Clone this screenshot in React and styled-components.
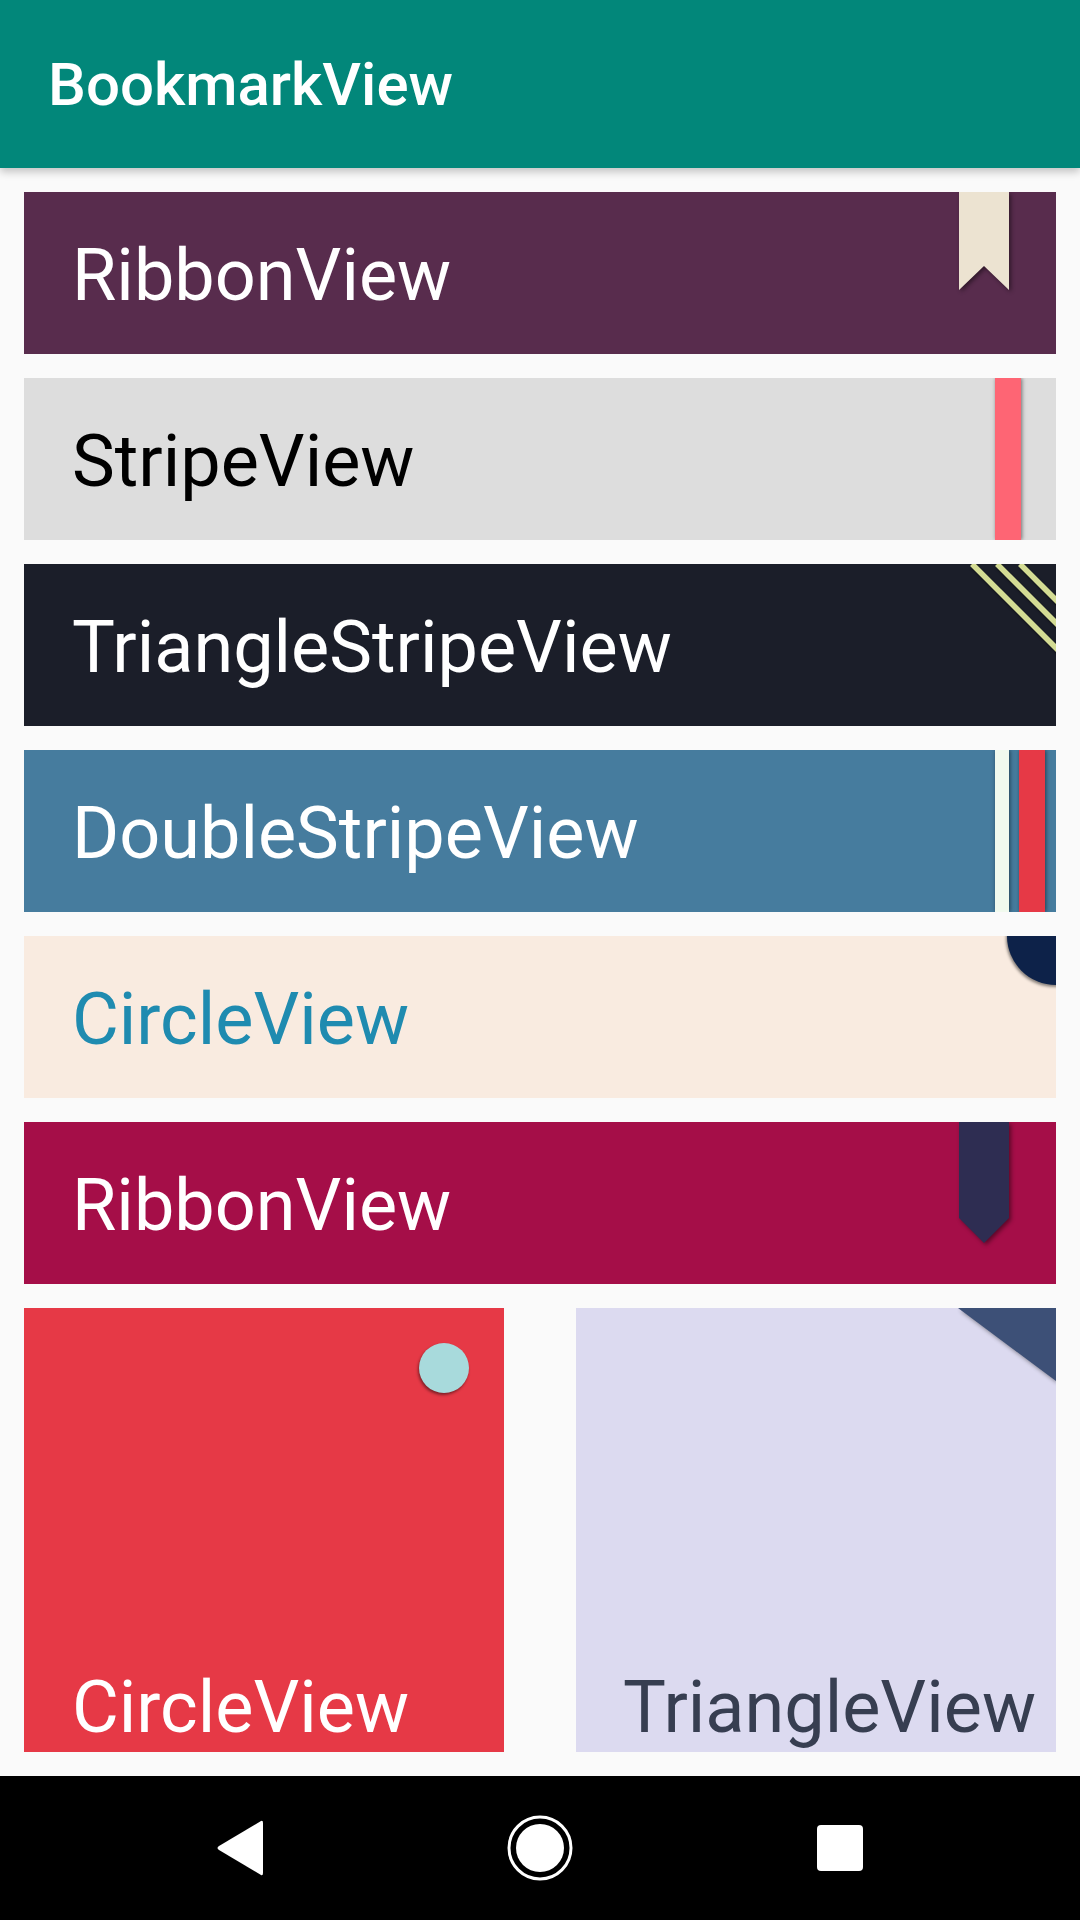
import styled, { createGlobalStyle } from "styled-components";

const GlobalStyle = createGlobalStyle`
  html, body {
    margin: 0;
    padding: 0;
    background: #fafafa;
  }
  * {
    box-sizing: border-box;
  }
`;

const Screen = styled.div`
  width: 1080px;
  height: 1920px;
  display: flex;
  flex-direction: column;
  background: #fafafa;
  font-family: Roboto, "Noto Sans", sans-serif;
  overflow: hidden;
`;

const AppBar = styled.header`
  height: 168px;
  flex-shrink: 0;
  display: flex;
  align-items: center;
  padding-left: 48px;
  background: #02877a;
  color: #fff;
  font-size: 60px;
  font-weight: 500;
  box-shadow: 0 4px 8px rgba(0, 0, 0, 0.22);
  position: relative;
  z-index: 2;
`;

const List = styled.main`
  flex: 1;
  display: flex;
  flex-direction: column;
  gap: 24px;
  padding: 24px;
`;

const Card = styled.div`
  position: relative;
  overflow: hidden;
  height: 162px;
  display: flex;
  align-items: center;
  padding: 4px 0 0 48px;
  background: ${(p) => p.bg};
  color: ${(p) => p.fg || "#fff"};
  font-size: 72px;
`;

const SquareRow = styled.div`
  display: grid;
  grid-template-columns: 480px 480px;
  column-gap: 72px;
`;

const Square = styled.div`
  position: relative;
  overflow: hidden;
  height: 444px;
  display: flex;
  align-items: flex-end;
  justify-content: ${(p) => (p.right ? "flex-end" : "flex-start")};
  padding: ${(p) => (p.right ? "0 20px 2px 0" : "0 0 2px 48px")};
  background: ${(p) => p.bg};
  color: ${(p) => p.fg || "#fff"};
  font-size: 72px;
`;

const Corner = styled.svg`
  position: absolute;
  top: 0;
  right: ${(p) => p.right || 0}px;
  overflow: visible;
  filter: drop-shadow(2px 2px 2px rgba(0, 0, 0, 0.45));
`;

const Stripe = styled.div`
  position: absolute;
  top: 0;
  bottom: 0;
  right: ${(p) => p.right}px;
  width: ${(p) => p.w}px;
  background: ${(p) => p.color};
  box-shadow: 1px 0 4px rgba(0, 0, 0, 0.5);
`;

const Dot = styled.div`
  position: absolute;
  top: ${(p) => p.top}px;
  right: ${(p) => p.right}px;
  width: ${(p) => p.size}px;
  height: ${(p) => p.size}px;
  border-radius: 50%;
  background: ${(p) => p.color};
  box-shadow: -1px 2px 3px rgba(0, 0, 0, 0.45);
`;

const NavBar = styled.nav`
  height: 144px;
  flex-shrink: 0;
  background: #000;
  display: flex;
  justify-content: center;
  align-items: center;
  gap: 180px;
`;

const NavButton = styled.div`
  width: 120px;
  height: 120px;
  display: flex;
  align-items: center;
  justify-content: center;
`;

const Ribbon = ({ color, shape }) => (
  <Corner right={47} width="50" height="122" viewBox="0 0 50 122">
    {shape === "notch" ? (
      <polygon points="0,0 50,0 50,98 25,74 0,98" fill={color} />
    ) : (
      <polygon points="0,0 50,0 50,96 25,121 0,96" fill={color} />
    )}
  </Corner>
);

const DiagonalStripes = () => (
  <svg
    width="84"
    height="84"
    viewBox="0 0 84 84"
    style={{ position: "absolute", top: 0, right: 0, overflow: "visible" }}
  >
    <g
      stroke="#d4dc94"
      strokeWidth="5.5"
      style={{ filter: "drop-shadow(1px 2px 1px rgba(0,0,0,0.5))" }}
    >
      <line x1="0" y1="0" x2="90" y2="90" />
      <line x1="25" y1="0" x2="90" y2="65" />
      <line x1="48" y1="0" x2="90" y2="42" />
    </g>
  </svg>
);

const CornerTriangle = () => (
  <Corner width="98" height="73" viewBox="0 0 98 73">
    <polygon points="0,0 98,0 98,73" fill="#3d5077" />
  </Corner>
);

export default function App() {
  return (
    <>
      <GlobalStyle />
      <Screen>
        <AppBar>BookmarkView</AppBar>
        <List>
          <Card bg="#582c4d">
            RibbonView
            <Ribbon color="#ece3d1" shape="notch" />
          </Card>
          <Card bg="#dddddd" fg="#000">
            StripeView
            <Stripe right={35} w={26} color="#fe6574" />
          </Card>
          <Card bg="#1b1e29">
            TriangleStripeView
            <DiagonalStripes />
          </Card>
          <Card bg="#467c9e">
            DoubleStripeView
            <Stripe right={47} w={14} color="#f1faee" />
            <Stripe right={11} w={26} color="#e63946" />
          </Card>
          <Card bg="#f9ebe0" fg="#1f8bb0">
            CircleView
            <Dot top={-49} right={-49} size={98} color="#0d2249" />
          </Card>
          <Card bg="#a50e48">
            RibbonView
            <Ribbon color="#2e2d52" shape="point" />
          </Card>
          <SquareRow>
            <Square bg="#e63946">
              CircleView
              <Dot top={35} right={35} size={50} color="#a8dadc" />
            </Square>
            <Square bg="#dcdaf0" fg="#373e51" right>
              TriangleView
              <CornerTriangle />
            </Square>
          </SquareRow>
        </List>
        <NavBar>
          <NavButton>
            <svg width="50" height="58" viewBox="0 0 50 58">
              <path
                d="M46 2 L4 27 Q1 29 4 31 L46 56 Q48 57 48 54 L48 4 Q48 1 46 2 Z"
                fill="#fff"
              />
            </svg>
          </NavButton>
          <NavButton>
            <svg width="68" height="68" viewBox="0 0 68 68">
              <circle cx="34" cy="34" r="31" fill="none" stroke="#fff" strokeWidth="3" />
              <circle cx="34" cy="34" r="24" fill="#fff" />
            </svg>
          </NavButton>
          <NavButton>
            <svg width="46" height="46" viewBox="0 0 46 46">
              <rect x="0" y="0" width="46" height="46" rx="4" fill="#fff" />
            </svg>
          </NavButton>
        </NavBar>
      </Screen>
    </>
  );
}
